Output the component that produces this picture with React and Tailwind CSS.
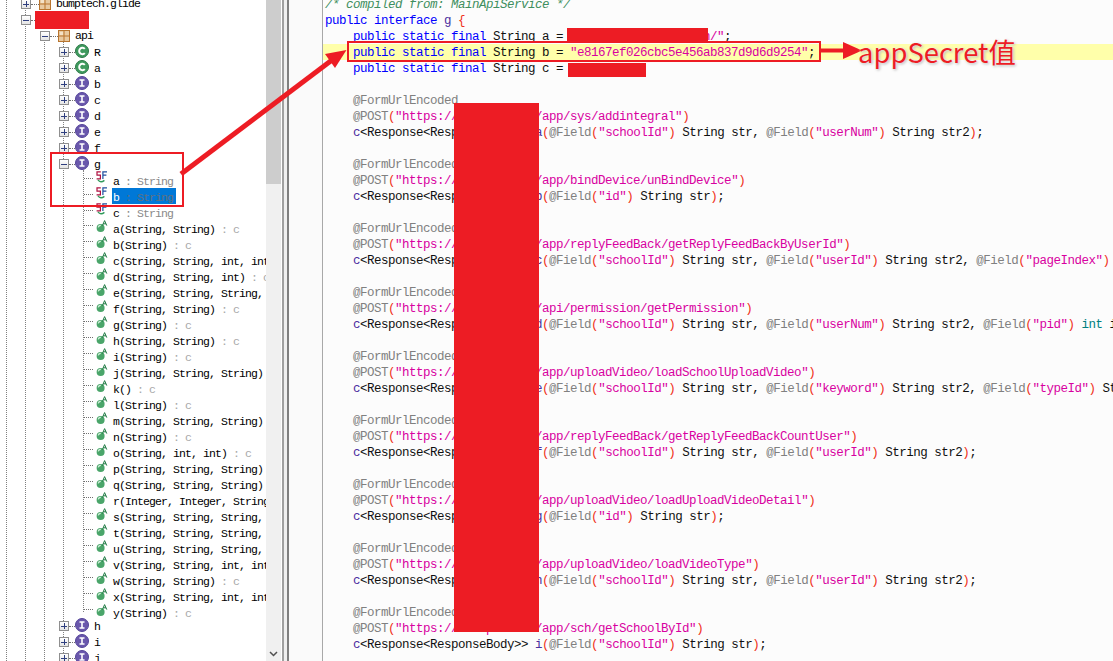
function Box({ open }) {
  return (
    <span className="w-[10px] h-[10px] shrink-0 border border-[#8f8f8f] bg-[linear-gradient(#ffffff,#e4e4e4)] flex items-center justify-center relative">
      <span className="absolute w-[6px] h-[1px] bg-[#2f3f7f]" />
      {!open && <span className="absolute w-[1px] h-[6px] bg-[#2f3f7f]" />}
    </span>
  );
}

function Dots({ w }) {
  return <span style={{ width: w }} className="block shrink-0 border-t border-dotted border-[#707070] h-0" />;
}

function PackageIcon() {
  return (
    <svg width="12" height="12" viewBox="0 0 12 12" className="shrink-0">
      <rect x="0.5" y="0.5" width="11" height="11" fill="#e8c9a0" stroke="#b9752f" />
      <path d="M6 1v10M1 6h10" stroke="#b9752f" />
      <path d="M2 2h3v3H2z" fill="#f4e2c8" />
    </svg>
  );
}

function ClassIcon() {
  return (
    <svg width="14" height="14" viewBox="0 0 14 14" className="shrink-0">
      <circle cx="7" cy="7" r="6.5" fill="#3f9a5e" stroke="#2c7a48" />
      <path d="M9.8 4.9A3.2 3.2 0 1 0 9.8 9.1" fill="none" stroke="#fff" strokeWidth="2" />
    </svg>
  );
}

function IfaceIcon() {
  return (
    <svg width="14" height="14" viewBox="0 0 14 14" className="shrink-0">
      <circle cx="7" cy="7" r="6.5" fill="#6a58ac" stroke="#54449a" />
      <path d="M4.5 4h5M4.5 10h5M7 4v6" fill="none" stroke="#fff" strokeWidth="1.6" />
    </svg>
  );
}

function FieldIcon() {
  return (
    <svg width="12" height="12" viewBox="0 0 12 12" className="shrink-0">
      <path d="M4.8 0.8H1V4.2H4.4V7.8H0.6" fill="none" stroke="#b01040" strokeWidth="1.2" />
      <path d="M11 0.8H6.9V8M6.9 4.2H10.4" fill="none" stroke="#1f4f9f" strokeWidth="1.2" />
      <path d="M2 8.8Q4.6 12.4 8.4 9.4" fill="none" stroke="#2f9a5a" strokeWidth="1.4" />
    </svg>
  );
}

function MethodIcon() {
  return (
    <svg width="12" height="13" viewBox="0 0 12 13" className="shrink-0">
      <circle cx="4.6" cy="8" r="4" fill="#4aa56a" />
      <path d="M2.2 7.4A2.6 2.6 0 0 1 4.8 5.4" fill="none" stroke="#d4f0dc" strokeWidth="1.2" />
      <path d="M6.4 5.6L8.6 0.6L10.8 5.6M7.2 3.8H10" fill="none" stroke="#1f7a43" strokeWidth="1" />
    </svg>
  );
}

function Label({ children, suffix, selected, suffixTone = "text-[#8a8a8a]" }) {
  return (
    <span
      className={`block h-4 leading-5 whitespace-pre overflow-hidden shrink-0 pl-[1px] pr-[3px] ${selected ? "bg-[#0078d7] text-white" : "text-black"}`}
    >
      {children}
      {suffix && <span className={selected ? "text-[#60707f]" : suffixTone}>{suffix}</span>}
    </span>
  );
}

function PlainLabel({ children }) {
  return <span className="block h-4 leading-4 whitespace-pre text-black">{children}</span>;
}

function NodeRow({ pad, open, icon, dots = 8, children }) {
  return (
    <div style={{ paddingLeft: pad }} className="flex items-center h-4">
      <Box open={open} />
      <Dots w={dots} />
      {icon}
      <span className="w-[5px] shrink-0" />
      {children}
    </div>
  );
}

function TypeRow({ icon, name, open }) {
  return (
    <div className="flex items-center h-4 pl-[59px]">
      <Box open={open} />
      <Dots w={6} />
      <span className="-mt-[3px] flex">{icon}</span>
      <span className="w-[5px] shrink-0" />
      <span className="mt-[1px]"><PlainLabel>{name}</PlainLabel></span>
    </div>
  );
}

function MemberRow({ icon, name, suffix, selected, tone, iconShift, dotShift }) {
  return (
    <div className="flex items-center h-4 pl-[84px]">
      <span className={`w-[12px] shrink-0 flex ${dotShift}`}><Dots w={9} /></span>
      <span className={`flex w-[16px] shrink-0 ${iconShift}`}>{icon}</span>
      <Label suffix={suffix} selected={selected} suffixTone={tone}>{name}</Label>
    </div>
  );
}

const methods = [
  ["a(String, String)", " : c"],
  ["b(String)", " : c"],
  ["c(String, String, int, int)", " : c"],
  ["d(String, String, int)", " : c"],
  ["e(String, String, String, String)", " : c"],
  ["f(String, String)", " : c"],
  ["g(String)", " : c"],
  ["h(String, String)", " : c"],
  ["i(String)", " : c"],
  ["j(String, String, String)", " : c"],
  ["k()", " : c"],
  ["l(String)", " : c"],
  ["m(String, String, String)", " : c"],
  ["n(String)", " : c"],
  ["o(String, int, int)", " : c"],
  ["p(String, String, String)", " : c"],
  ["q(String, String, String)", " : c"],
  ["r(Integer, Integer, String, String)", " : c"],
  ["s(String, String, String, String)", " : c"],
  ["t(String, String, String, String)", " : c"],
  ["u(String, String, String, String)", " : c"],
  ["v(String, String, int, int)", " : c"],
  ["w(String, String)", " : c"],
  ["x(String, String, int, int)", " : c"],
  ["y(String)", " : c"],
];

function Tree() {
  return (
    <div className="relative w-[266px] shrink-0 h-full overflow-hidden bg-white font-['Liberation_Mono',monospace] text-[11.5px] tracking-[-0.9px]">
      <div className="absolute left-[6px] top-0 bottom-0 border-l border-dotted border-[#808080]" />
      <div className="absolute left-[25px] top-0 bottom-0 border-l border-dotted border-[#808080]" />
      <div className="absolute left-[44px] top-[40px] bottom-0 border-l border-dotted border-[#808080]" />
      <div className="absolute left-[63px] top-[42px] bottom-0 border-l border-dotted border-[#808080]" />
      <div className="absolute left-[83px] top-[170px] h-[442px] border-l border-dotted border-[#808080]" />
      <div className="relative -mt-1">
        <NodeRow pad={21} icon={<PackageIcon />}>
          <PlainLabel>bumptech.glide</PlainLabel>
        </NodeRow>
        <NodeRow pad={21} open icon={<span className="w-[12px]" />}>
          <PlainLabel> </PlainLabel>
        </NodeRow>
        <NodeRow pad={40} open icon={<PackageIcon />}>
          <PlainLabel>api</PlainLabel>
        </NodeRow>
        <TypeRow icon={<ClassIcon />} name="R" />
        <TypeRow icon={<ClassIcon />} name="a" />
        <TypeRow icon={<IfaceIcon />} name="b" />
        <TypeRow icon={<IfaceIcon />} name="c" />
        <TypeRow icon={<IfaceIcon />} name="d" />
        <TypeRow icon={<IfaceIcon />} name="e" />
        <TypeRow icon={<IfaceIcon />} name="f" />
        <TypeRow icon={<IfaceIcon />} name="g" open />
        <MemberRow icon={<FieldIcon />} name="a" suffix=" : String" dotShift="-mt-[4px]" iconShift="-mt-[6px]" />
        <MemberRow icon={<FieldIcon />} name="b" suffix=" : String" selected dotShift="-mt-[4px]" iconShift="-mt-[6px]" />
        <MemberRow icon={<FieldIcon />} name="c" suffix=" : String" dotShift="-mt-[4px]" iconShift="-mt-[6px]" />
        {methods.map(([n, s]) => (
          <MemberRow key={n} icon={<MethodIcon />} name={n} suffix={s} tone="text-[#a8a8a8]" dotShift="-mt-[5px]" iconShift="-mt-[4px]" />
        ))}
        <div className="-mt-[2px]">
          <TypeRow icon={<IfaceIcon />} name="h" />
          <TypeRow icon={<IfaceIcon />} name="i" />
          <TypeRow icon={<IfaceIcon />} name="j" />
        </div>
      </div>
    </div>
  );
}

function Scrollbar() {
  return (
    <div className="w-[15px] shrink-0 h-full flex flex-col bg-[#f0f0f0]">
      <div className="h-[184px] bg-[#cdcdcd]" />
      <div className="flex-1" />
      <div className="h-[14px] flex items-center justify-center">
        <svg width="9" height="6" viewBox="0 0 9 6">
          <path d="M1 1l3.5 3.5L8 1" fill="none" stroke="#505050" strokeWidth="1.5" />
        </svg>
      </div>
    </div>
  );
}

const K = ({ children }) => <span className="text-[#0000ff]">{children}</span>;
const T = ({ children }) => <span className="text-[#4a2f9f]">{children}</span>;
const N = ({ children }) => <span className="text-[#101010]">{children}</span>;
const S = ({ children }) => <span className="text-[#d800a0]">{children}</span>;
const A = ({ children }) => <span className="text-[#808080]">{children}</span>;
const P = ({ children }) => <span className="text-[#f03020]">{children}</span>;

const Field = ({ n }) => (
  <>
    <A>@Field</A>
    <P>(</P>
    <S>"{n}"</S>
    <P>)</P>
  </>
);

function Line({ children, hl }) {
  return <div className={`h-4 leading-[18px] whitespace-pre pl-[2px] ${hl ? "bg-[#ffffaa]" : ""}`}>{children}</div>;
}

function Group({ url, name, args, end = ");" }) {
  return (
    <>
      <Line>    <A>@FormUrlEncoded</A></Line>
      <Line>
        {"    "}
        <A>@POST</A>
        <P>(</P>
        <S>"https://example.com{url}"</S>
        <P>)</P>
      </Line>
      <Line>
        {"    "}
        <T>c</T>
        <N>{"<Response<ResponseBody>> "}</N>
        <T>{name}</T>
        <P>(</P>
        {args}
        {end === ");" ? (
          <>
            <P>)</P>
            <N>;</N>
          </>
        ) : null}
      </Line>
      <Line> </Line>
    </>
  );
}

const Str = ({ v, c }) => <N>{` String ${v}${c ? ", " : ""}`}</N>;

const constLine = (letter, value, hl) => (
  <Line hl={hl}>
    {"    "}
    <K>public static final</K>
    <N>{` String ${letter} = `}</N>
    <S>{value}</S>
    <N>;</N>
  </Line>
);

function Code() {
  return (
    <div className="flex-1 min-w-0 h-full overflow-hidden bg-[#fcfcfc] font-['Liberation_Mono',monospace] text-[12.5px] tracking-[-0.5px]">
      <div className="-mt-1">
        <Line><span className="italic text-[#3f8f5f]">/* compiled from: MainApiService */</span></Line>
        <Line>
          <K>public interface</K>
          <N> </N>
          <T>g</T>
          <N> </N>
          <P>{"{"}</P>
        </Line>
        {constLine("a", '"https://example.coh/"')}
        {constLine("b", '"e8167ef026cbc5e456ab837d9d6d9254"', true)}
        {constLine("c", '"abcdefgh"')}
        <Line> </Line>
        <Group url="/app/sys/addintegral" name="a" args={<><Field n="schoolId" /><Str v="str" c /><Field n="userNum" /><Str v="str2" /></>} />
        <Group url="/app/bindDevice/unBindDevice" name="b" args={<><Field n="id" /><Str v="str" /></>} />
        <Group url="/app/replyFeedBack/getReplyFeedBackByUserId" name="c" args={<><Field n="schoolId" /><Str v="str" c /><Field n="userId" /><Str v="str2" c /><Field n="pageIndex" /><N> int i</N></>} end="" />
        <Group url="/api/permission/getPermission" name="d" args={<><Field n="schoolId" /><Str v="str" c /><Field n="userNum" /><Str v="str2" c /><Field n="pid" /><N> </N><span className="text-[#008080]">int</span><N> i</N></>} end="" />
        <Group url="/app/uploadVideo/loadSchoolUploadVideo" name="e" args={<><Field n="schoolId" /><Str v="str" c /><Field n="keyword" /><Str v="str2" c /><Field n="typeId" /><N> String str3</N></>} end="" />
        <Group url="/app/replyFeedBack/getReplyFeedBackCountUser" name="f" args={<><Field n="schoolId" /><Str v="str" c /><Field n="userId" /><Str v="str2" /></>} />
        <Group url="/app/uploadVideo/loadUploadVideoDetail" name="g" args={<><Field n="id" /><Str v="str" /></>} />
        <Group url="/app/uploadVideo/loadVideoType" name="h" args={<><Field n="schoolId" /><Str v="str" c /><Field n="userId" /><Str v="str2" /></>} />
        <Group url="/app/sch/getSchoolById" name="i" args={<><Field n="schoolId" /><Str v="str" /></>} />
      </div>
    </div>
  );
}

export default function App() {
  return (
    <div className="relative w-[1113px] h-[661px] overflow-hidden flex bg-white">
      <Tree />
      <Scrollbar />
      <div className="w-[1px] shrink-0 bg-white" />
      <div className="w-[2px] shrink-0 bg-[#a0a0a0]" />
      <div className="w-[3px] shrink-0 bg-[#f0f0f0]" />
      <div className="w-[2px] shrink-0 bg-[#808080]" />
      <div className="w-[34px] shrink-0 h-full bg-[#fafafa] border-r border-[#a8a8a8]" />
      <Code />

      {/* redactions */}
      <div className="absolute left-[35px] top-[11px] w-[54px] h-[18px] bg-[#ed1c24]" />
      <div className="absolute left-[567px] top-[28px] w-[141px] h-[13px] bg-[#ed1c24]" />
      <div className="absolute left-[568px] top-[63px] w-[78px] h-[14px] bg-[#ed1c24]" />
      <div className="absolute left-[454px] top-[103px] w-[85px] h-[529px] bg-[#ed1c24]" />

      {/* callout boxes */}
      <div className="absolute left-[50px] top-[152px] w-[134px] h-[55px] border-2 border-[#ed1c24]" />
      <div className="absolute left-[347px] top-[41px] w-[474px] h-[21px] border-2 border-[#ed1c24]" />

      {/* arrows */}
      <svg className="absolute inset-0 pointer-events-none" width="1113" height="661" viewBox="0 0 1113 661">
        <path d="M181 174L332 60" stroke="#ed1c24" strokeWidth="5" fill="none" />
        <path d="M346.5 50L325 54L335 68Z" fill="#ed1c24" />
        <path d="M821 50.5H846" stroke="#ed1c24" strokeWidth="4" fill="none" />
        <path d="M843 42L862 50.5L843 59Z" fill="#ed1c24" />
      </svg>

      <div className="absolute left-[858px] top-[32px] text-[27.4px] leading-[38px] whitespace-pre text-[#ed1c24] font-['Noto_Sans_CJK_SC',sans-serif] [text-shadow:0_0_3px_#ffffff,1px_1px_3px_#a0a0a0]">
        appSecret值
      </div>
    </div>
  );
}
